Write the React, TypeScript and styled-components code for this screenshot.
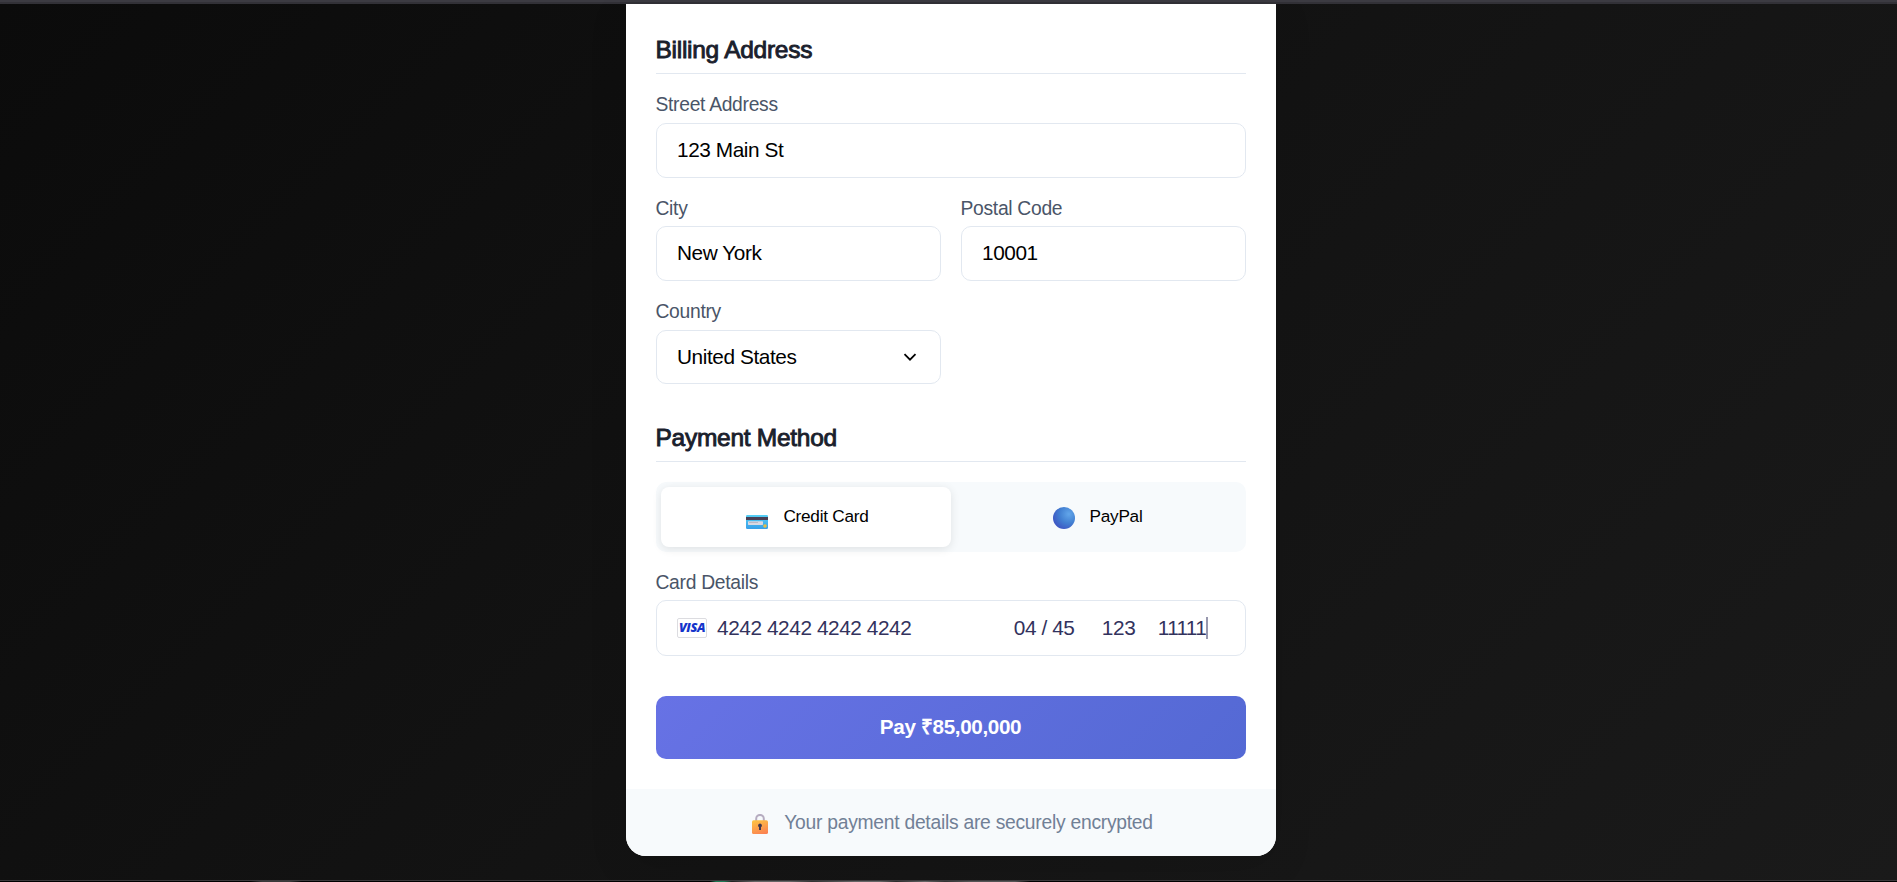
import React from "react";
import styled, { createGlobalStyle } from "styled-components";

const GlobalStyle = createGlobalStyle`
  *, *::before, *::after { box-sizing: border-box; }
  html, body { margin: 0; padding: 0; }
  body {
    font-family: "Liberation Sans", Arial, sans-serif;
    background: #121212;
    overflow: hidden;
  }
`;

const Page = styled.div`
  height: 882px;
  display: flex;
  flex-direction: column;
  align-items: center;
  background: linear-gradient(135deg, #0b0b0b 0%, #131313 50%, #1a1a1a 100%);
`;

const TopEdge = styled.div`
  width: 100%;
  height: 4px;
  flex: none;
  background: linear-gradient(#3c3b42 0 2px, #323137 2px 4px);
`;

const BottomEdge = styled.div`
  width: 100%;
  height: 2px;
  flex: none;
  margin-top: auto;
  border-top: 1px solid #3c3a3c;
  background: linear-gradient(
    90deg,
    #000 0 250px,
    #3a3a3a 262px 290px,
    #000 302px 710px,
    #1f7a55 716px 724px,
    #222 732px,
    #666 755px 790px,
    #333 812px,
    #666 855px 880px,
    #2c2c2c 896px,
    #666 925px,
    #333 945px,
    #555 970px 1015px,
    #000 1030px
  );
`;

const Card = styled.main`
  width: 650px;
  height: 852px;
  margin-left: 5px;
  display: flex;
  flex-direction: column;
  background: #fff;
  border-radius: 0 0 20px 20px;
  overflow: hidden;
  box-shadow: 0 10px 38px rgba(0, 0, 0, 0.12);
`;

const Form = styled.form`
  flex: 1;
  padding: 0 30px;
`;

const Heading = styled.h2<{ $top: number }>`
  height: 41px;
  margin: ${(p) => p.$top}px 0 20px;
  border-bottom: 1px solid #e2e8f0;
  color: #1a202c;
  font-size: 24.5px;
  font-weight: 400;
  line-height: 34px;
  letter-spacing: -0.27px;
  text-indent: -0.5px;
  -webkit-text-stroke: 0.9px #1a202c;
`;

const Grid = styled.div`
  display: grid;
  grid-template-columns: 1fr 1fr;
  column-gap: 20px;
`;

const Field = styled.div<{ $wide?: boolean; $after?: number }>`
  grid-column: ${(p) => (p.$wide ? "1 / -1" : "auto")};
  margin-bottom: ${(p) => p.$after ?? 20}px;
`;

const Label = styled.label<{ $height?: number }>`
  display: block;
  height: ${(p) => p.$height ?? 28}px;
  color: #4a5568;
  font-size: 19.3px;
  letter-spacing: -0.3px;
  line-height: 21px;
  text-indent: -0.5px;
`;

const Control = styled.div<{ $height?: number }>`
  height: ${(p) => p.$height ?? 55}px;
  display: flex;
  align-items: center;
  padding: 0 20px 2px;
  border: 1px solid #e2e8f0;
  border-radius: 10px;
  color: #000;
  font-size: 20.8px;
  letter-spacing: -0.42px;
  line-height: 24px;
`;

const SelectControl = styled(Control)`
  justify-content: space-between;
  padding-right: 23px;
  padding-bottom: 0;
`;

const Tabs = styled.div`
  height: 70px;
  display: flex;
  padding: 5px;
  margin-bottom: 20px;
  background: #f7fafc;
  border-radius: 10px;
`;

const Tab = styled.button<{ $active?: boolean }>`
  flex: 1;
  display: flex;
  align-items: center;
  justify-content: center;
  gap: 15px;
  padding: 0 0 2px 3px;
  border: 0;
  border-radius: 8px;
  background: ${(p) => (p.$active ? "#fff" : "transparent")};
  box-shadow: ${(p) => (p.$active ? "0 2px 10px rgba(0, 0, 0, 0.1)" : "none")};
  color: #000;
  font-family: inherit;
  font-size: 17.2px;
  letter-spacing: -0.25px;
`;

const TabIcon = styled.svg<{ $drop: number }>`
  flex: none;
  margin-top: ${(p) => p.$drop}px;
`;

const CardControl = styled(Control)`
  color: #32325d;
  padding-right: 37px;
  padding-bottom: 0;
`;

const CardNumber = styled.span`
  flex: 1;
  margin-left: 10px;
`;

const Expiry = styled.span`
  width: 88px;
`;

const Cvc = styled.span`
  width: 56px;
`;

const Zip = styled.span`
  display: flex;
  align-items: center;
  letter-spacing: -0.7px;
`;

const Caret = styled.i`
  width: 2px;
  height: 22px;
  background: #9898ae;
`;

const PayButton = styled.button`
  width: 100%;
  height: 63px;
  display: block;
  padding: 0 1px 3px 0;
  border: 0;
  border-radius: 10px;
  background: linear-gradient(135deg, #6772e5 0%, #5469d4 100%);
  color: #fff;
  font-family: inherit;
  font-size: 20.7px;
  font-weight: 700;
  letter-spacing: -0.38px;
`;

const Footer = styled.footer`
  height: 67px;
  flex: none;
  display: flex;
  align-items: center;
  justify-content: center;
  gap: 16px;
  padding-left: 3px;
  background: #f7fafc;
  color: #718096;
  font-size: 19.3px;
  letter-spacing: -0.26px;
`;

const LockIcon = styled.svg`
  margin-top: 3px;
`;

function CreditCardGlyph() {
  return (
    <TabIcon $drop={12} width="22" height="14" viewBox="0 0 22 14">
      <defs>
        <linearGradient id="cardFace" x1="0" y1="0" x2="0" y2="1">
          <stop offset="0" stopColor="#55d0f5" />
          <stop offset="1" stopColor="#389fe8" />
        </linearGradient>
      </defs>
      <rect width="22" height="14" rx="1.2" fill="url(#cardFace)" />
      <rect y="2" width="22" height="3" fill="#493f55" />
      <rect x="2" y="6.2" width="15" height="3.7" rx="0.6" fill="#d9d9e3" />
      <rect x="3" y="7" width="9" height="1" fill="#bdb9c5" />
      <circle cx="19" cy="11" r="1.8" fill="#e6bd45" />
    </TabIcon>
  );
}

function BlueCircleGlyph() {
  return (
    <TabIcon $drop={4} width="22" height="22" viewBox="0 0 22 22">
      <defs>
        <radialGradient id="ball" cx="0.72" cy="0.32" r="0.75">
          <stop offset="0" stopColor="#62a6ea" />
          <stop offset="0.55" stopColor="#4280d2" />
          <stop offset="1" stopColor="#3e58c4" />
        </radialGradient>
      </defs>
      <circle cx="11" cy="11" r="11" fill="url(#ball)" />
    </TabIcon>
  );
}

function LockGlyph() {
  return (
    <LockIcon width="16" height="20" viewBox="0 0 16 20">
      <defs>
        <linearGradient id="lockBody" x1="0.3" y1="0" x2="0.7" y2="1">
          <stop offset="0" stopColor="#fdc044" />
          <stop offset="1" stopColor="#fb8252" />
        </linearGradient>
      </defs>
      <path d="M4.2 8V4.7a3.8 3.8 0 0 1 7.6 0V8" fill="none" stroke="#b6acc0" strokeWidth="2" />
      <rect y="6.2" width="16" height="13.8" rx="1.6" fill="url(#lockBody)" />
      <path d="M8 9.6a2 2 0 0 1 1 3.7V16H7v-2.7a2 2 0 0 1 1-3.7z" fill="#43384f" />
    </LockIcon>
  );
}

function VisaBadge() {
  return (
    <svg width="30" height="20" viewBox="0 0 30 20">
      <rect x="0.5" y="0.5" width="29" height="19" rx="1.5" fill="#fff" stroke="#dcdce0" />
      <text
        x="2"
        y="14.2"
        textLength="26"
        lengthAdjust="spacingAndGlyphs"
        letterSpacing="-0.4"
        fontFamily="'Open Sans', sans-serif"
        fontStyle="italic"
        fontWeight="800"
        fontSize="11.6"
        fill="#1434cb"
      >
        VISA
      </text>
    </svg>
  );
}

function ChevronGlyph() {
  return (
    <svg width="14" height="10" viewBox="0 0 14 10">
      <path d="M1.5 2.2 7 7.7l5.5-5.5" fill="none" stroke="#000" strokeWidth="1.8" />
    </svg>
  );
}

export default function App() {
  return (
    <>
      <GlobalStyle />
      <Page>
        <TopEdge />
        <Card>
          <Form>
            <Heading $top={29}>Billing Address</Heading>
            <Grid>
              <Field $wide>
                <Label $height={29}>Street Address</Label>
                <Control>123 Main St</Control>
              </Field>
              <Field>
                <Label>City</Label>
                <Control>New York</Control>
              </Field>
              <Field>
                <Label>Postal Code</Label>
                <Control>10001</Control>
              </Field>
              <Field $after={0}>
                <Label $height={29}>Country</Label>
                <SelectControl $height={54}>
                  United States
                  <ChevronGlyph />
                </SelectControl>
              </Field>
            </Grid>
            <Heading $top={37}>Payment Method</Heading>
            <Tabs>
              <Tab type="button" $active>
                <CreditCardGlyph />
                Credit Card
              </Tab>
              <Tab type="button">
                <BlueCircleGlyph />
                PayPal
              </Tab>
            </Tabs>
            <Field $after={40}>
              <Label>Card Details</Label>
              <CardControl $height={56}>
                <VisaBadge />
                <CardNumber>4242 4242 4242 4242</CardNumber>
                <Expiry>04 / 45</Expiry>
                <Cvc>123</Cvc>
                <Zip>
                  11111
                  <Caret />
                </Zip>
              </CardControl>
            </Field>
            <PayButton type="button">Pay ₹85,00,000</PayButton>
          </Form>
          <Footer>
            <LockGlyph />
            Your payment details are securely encrypted
          </Footer>
        </Card>
        <BottomEdge />
      </Page>
    </>
  );
}
